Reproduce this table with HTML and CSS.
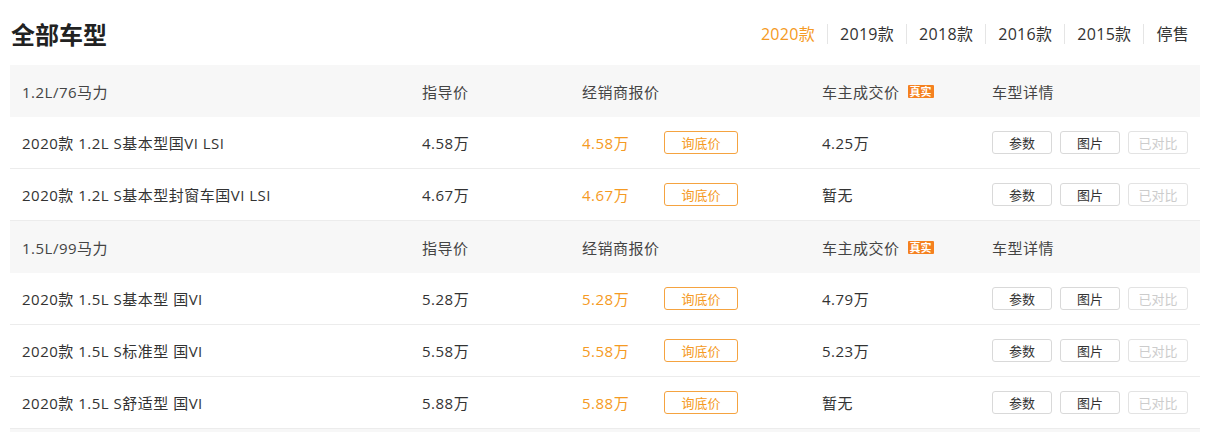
FILE: index.html
```html
<!DOCTYPE html>
<html lang="zh-CN">
<head>
<meta charset="utf-8">
<title>全部车型</title>
<link rel="stylesheet" href="styles.css">
</head>
<body>
<div class="page">
  <div class="top">
    <h2 class="title">全部车型</h2>
    <ul class="tabs">
      <li class="tab active">2020款</li>
      <li class="tab">2019款</li>
      <li class="tab">2018款</li>
      <li class="tab">2016款</li>
      <li class="tab">2015款</li>
      <li class="tab">停售</li>
    </ul>
  </div>

  <div class="table">
    <div class="row head">
      <div class="cell">1.2L/76马力</div>
      <div class="cell">指导价</div>
      <div class="cell">经销商报价</div>
      <div class="cell">车主成交价<span class="badge">真实</span></div>
      <div class="cell">车型详情</div>
    </div>
    <div class="row">
      <div class="cell">2020款 1.2L S基本型国VI LSI</div>
      <div class="cell">4.58万</div>
      <div class="cell"><span class="dealer">4.58万</span><span class="ask">询底价</span></div>
      <div class="cell">4.25万</div>
      <div class="cell btns"><span class="btn">参数</span><span class="btn">图片</span><span class="btn off">已对比</span></div>
    </div>
    <div class="row">
      <div class="cell">2020款 1.2L S基本型封窗车国VI LSI</div>
      <div class="cell">4.67万</div>
      <div class="cell"><span class="dealer">4.67万</span><span class="ask">询底价</span></div>
      <div class="cell">暂无</div>
      <div class="cell btns"><span class="btn">参数</span><span class="btn">图片</span><span class="btn off">已对比</span></div>
    </div>

    <div class="row head">
      <div class="cell">1.5L/99马力</div>
      <div class="cell">指导价</div>
      <div class="cell">经销商报价</div>
      <div class="cell">车主成交价<span class="badge">真实</span></div>
      <div class="cell">车型详情</div>
    </div>
    <div class="row">
      <div class="cell">2020款 1.5L S基本型 国VI</div>
      <div class="cell">5.28万</div>
      <div class="cell"><span class="dealer">5.28万</span><span class="ask">询底价</span></div>
      <div class="cell">4.79万</div>
      <div class="cell btns"><span class="btn">参数</span><span class="btn">图片</span><span class="btn off">已对比</span></div>
    </div>
    <div class="row">
      <div class="cell">2020款 1.5L S标准型 国VI</div>
      <div class="cell">5.58万</div>
      <div class="cell"><span class="dealer">5.58万</span><span class="ask">询底价</span></div>
      <div class="cell">5.23万</div>
      <div class="cell btns"><span class="btn">参数</span><span class="btn">图片</span><span class="btn off">已对比</span></div>
    </div>
    <div class="row">
      <div class="cell">2020款 1.5L S舒适型 国VI</div>
      <div class="cell">5.88万</div>
      <div class="cell"><span class="dealer">5.88万</span><span class="ask">询底价</span></div>
      <div class="cell">暂无</div>
      <div class="cell btns"><span class="btn">参数</span><span class="btn">图片</span><span class="btn off">已对比</span></div>
    </div>
    <div class="band"></div>
  </div>
</div>
</body>
</html>
```

FILE: styles.css
```css
* { box-sizing: border-box; }
html, body { margin: 0; padding: 0; background: #fff; }
body {
  font-family: "Open Sans", "Noto Sans CJK SC", sans-serif;
  color: #333;
  overflow: hidden;
}
.page {
  padding: 0 9px 0 10px;
}
.top {
  display: flex;
  align-items: center;
  justify-content: space-between;
  height: 65px;
  padding-top: 2px;
}
.title {
  margin: 0 0 0 1px;
  font-family: "Noto Sans CJK SC", sans-serif;
  font-size: 24px;
  font-weight: 700;
  color: #222;
  line-height: 30px;
}
.tabs {
  list-style: none;
  margin: 0;
  padding: 0;
  display: flex;
  align-items: center;
}
.tab {
  font-size: 16px;
  line-height: 20px;
  letter-spacing: 0.3px;
  padding: 0 12px 0 12px;
  border-left: 1px solid #e5e5e5;
  color: #333;
}
.tab:first-child { border-left: none; }
.tab:last-child { padding-right: 11px; }
.tab.active { color: #f59a23; }

.table { display: flex; flex-direction: column; }
.row {
  display: grid;
  grid-template-columns: 400px 160px 240px 170px 1fr;
  height: 52px;
  align-items: center;
  font-size: 15px;
  letter-spacing: 0.5px;
  border-bottom: 1px solid #ececec;
}
.row.head {
  background: #f7f7f7;
  border-bottom: none;
  color: #444;
}
.band {
  height: 10px;
  background: #f7f7f7;
}
.cell {
  padding-left: 12px;
  display: flex;
  align-items: center;
  white-space: nowrap;
}
.badge {
  margin-left: 8px;
  background: #f5811f;
  color: #fff;
  font-family: "Noto Sans CJK SC", sans-serif;
  font-size: 11px;
  line-height: 13px;
  letter-spacing: 0;
  padding: 0 2px;
  border-radius: 1px;
  font-weight: 700;
}
.dealer {
  color: #f59a23;
  width: 82px;
}
.ask {
  display: inline-flex;
  align-items: center;
  justify-content: center;
  width: 74px;
  height: 23px;
  border: 1px solid #f5a340;
  border-radius: 3px;
  color: #f59a23;
  font-size: 13px;
  letter-spacing: 0;
}
.btns { gap: 8px; }
.btn {
  display: inline-flex;
  align-items: center;
  justify-content: center;
  width: 60px;
  height: 23px;
  border: 1px solid #d9d9d9;
  border-radius: 3px;
  font-size: 13px;
  letter-spacing: 0;
  color: #333;
}
.btn.off { color: #ccc; border-color: #e3e3e3; }
```
